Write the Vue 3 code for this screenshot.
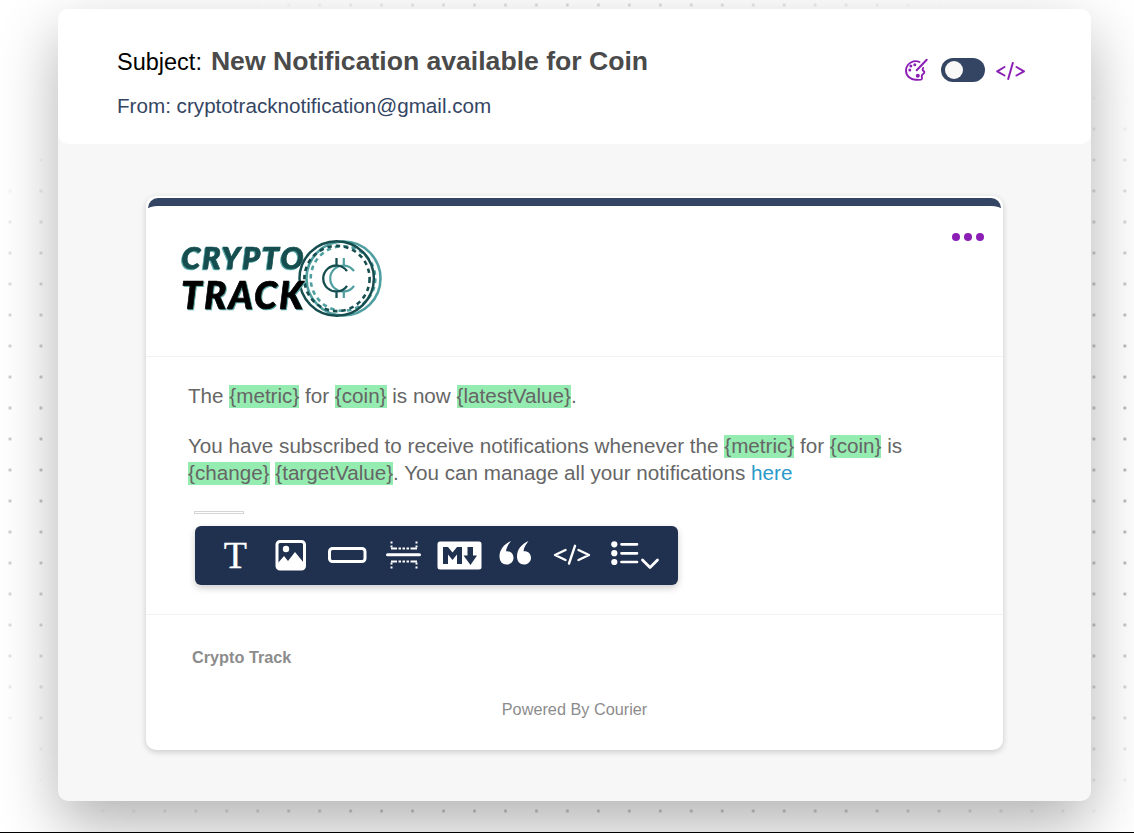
<script setup>
const dots = [0, 1, 2]
</script>

<template>
  <div class="page">
    <div class="dots"></div>
    <main class="window">
      <header class="head">
        <div class="meta">
          <div class="subject"><span class="label">Subject:</span><strong>New Notification available for Coin</strong></div>
          <div class="from">From: cryptotracknotification@gmail.com</div>
        </div>
        <div class="modes">
          <svg class="palette" width="24" height="24" viewBox="0 0 24 24" fill="none" stroke="#8b1fb5" stroke-width="1.9" stroke-linecap="round" stroke-linejoin="round">
            <path d="M15.500 4C10.500 1.600 2 4.800 2 12.600c0 5.300 4.300 8.900 9.400 9.100 2.200.1 4.800.4 6-.2 1.300-.6.500-1.800.3-3.200-.2-1.400.8-2 1.900-2.800 1.100-.8.900-2-.2-2.600-1-.6-.8-1.900-.2-3" />
            <path d="M22.700 1.800 12.700 12.200" stroke-width="2" />
            <g fill="#8b1fb5" stroke="none"><circle cx="5.800" cy="12" r="1.500" /><circle cx="6.800" cy="8" r="1.500" /><circle cx="10.800" cy="6.700" r="1.500" /><circle cx="13.800" cy="17.700" r="2" /></g>
          </svg>
          <div class="toggle"><i></i></div>
          <svg class="code" width="30" height="18" viewBox="0 0 30 18" fill="none" stroke="#8b1fb5" stroke-width="2" stroke-linecap="round" stroke-linejoin="round"><path d="M8.500 5 1.200 9.300 8.500 13.500M20.500 5l7.500 4.300-7.500 4.200M16.800 1l-4.600 16" /></svg>
        </div>
      </header>

      <section class="mail">
        <div class="accent"></div>
        <div class="brand">
          <svg class="logo" width="206" height="84" viewBox="0 0 206 84">
            <g fill="none" stroke="#4f9fa0">
              <circle cx="164.500" cy="42.500" r="37" stroke-width="2.600" />
              <circle cx="164" cy="42.500" r="32.300" stroke-width="2.600" stroke-dasharray="4.500 3.950" />
              <path d="M175 35.200a13 13 0 1 0 0 14.600M164.800 22v7.500M164.800 54.500v7.500" stroke-width="2.200" />
            </g>
            <g fill="none" stroke="#164e50">
              <circle cx="157.700" cy="42.500" r="37.200" stroke-width="2.500" />
              <circle cx="158" cy="42.500" r="32.600" stroke-width="2.600" stroke-dasharray="4.500 3.950" />
              <path d="M168 35.200a13 13 0 1 0 0 14.600M157.500 22v7.500M157.500 54.500v7.500" stroke-width="2.300" />
            </g>
            <text class="word top" x="2.500" y="33" textLength="122">CRYPTO</text>
            <text class="word bottom" x="2" y="72.500" textLength="122">TRACK</text>
          </svg>
          <div class="more"><i v-for="d in dots" :key="d"></i></div>
        </div>

        <div class="body">
          <p>The <mark>{metric}</mark> for <mark>{coin}</mark> is now <mark>{latestValue}</mark>.</p>
          <p>You have subscribed to receive notifications whenever the <mark>{metric}</mark> for <mark>{coin}</mark> is<br><mark>{change}</mark> <mark>{targetValue}</mark>. You can manage all your notifications <a>here</a></p>
          <div class="handle"></div>
          <div class="toolbar">
            <svg width="483" height="59" viewBox="0 0 483 59" fill="none" stroke="#fff" stroke-width="3" stroke-linecap="round" stroke-linejoin="round">
              <text x="40.300" y="42" text-anchor="middle" font-family="Liberation Serif" font-size="38" fill="#fff" stroke="#fff" stroke-width=".3">T</text>
              <rect x="82" y="15.500" width="27.500" height="27.500" rx="3" />
              <circle cx="91" cy="23" r="3.200" fill="#fff" stroke="none" />
              <path d="M83 37 89 30l4 5 7-9 9 11v6H83z" fill="#fff" stroke="none" />
              <rect x="134.500" y="22.500" width="35.500" height="13" rx="3" />
              <path d="M192.500 28.800h32" />
              <path d="M196.500 15.500v6M221.500 15.500v6M196.500 36.500v6M221.500 36.500v6" stroke-width="2" stroke-dasharray="2 2" stroke-linecap="butt" />
              <path d="M196 22.500h26M196 35.500h26" stroke-width="1.900" stroke-dasharray="6 1.500 2.500 1.500 2.500 1.500 2.500 1.500 7" stroke-linecap="butt" />
              <rect x="242.500" y="15.500" width="44" height="28" rx="2.500" fill="#fff" stroke="none" />
              <path d="M248 38V21h5l4.500 5.500L262 21h5v17h-5v-9.500l-4.500 5.500-4.500-5.500V38zM272.500 21h5.500v8.500h4L275.500 39l-7-9.500h4z" fill="#20304f" stroke="none" />
              <g fill="#fff" stroke="none"><path d="M316 15c-7 3-11.500 8.500-11.500 15.500 0 5 3 8 7 8s7-3 7-6.800-2.800-6.500-6.500-6.500h-1c.5-4 2.500-7 5-10.200z" /><path d="M333.500 15c-7 3-11.500 8.500-11.500 15.500 0 5 3 8 7 8s7-3 7-6.800-2.800-6.500-6.500-6.500h-1c.5-4 2.500-7 5-10.200z" /></g>
              <path d="M370.500 24 360 29l10.500 5M383.500 24l10.500 5-10.500 5M380 19.800l-6 17.700" stroke-width="2.400" />
              <g fill="#fff" stroke="none"><circle cx="419.300" cy="18.300" r="3.100" /><circle cx="419.300" cy="27.200" r="3.100" /><circle cx="419.300" cy="36" r="3.100" /></g>
              <path d="M426.500 18.300h15.500M426.500 27.300h15.500M426.500 36h15.500" stroke-width="2.700" />
              <path d="m447.500 34 7.500 7.500 7.500-7.500" stroke-width="2.800" />
            </svg>
          </div>
        </div>

        <footer>
          <strong>Crypto Track</strong>
          <div class="powered">Powered By Courier</div>
        </footer>
      </section>
    </main>
  </div>
</template>

<style>
body { margin: 0; background: #fff; }
</style>

<style scoped>
* { box-sizing: border-box; }
.page {
  position: relative; height: 833px; overflow: hidden; padding: 9px 43px 0 58px;
  border-bottom: 1px solid #000; font-family: "Liberation Sans", Arial, sans-serif;
}
.dots {
  position: absolute; inset: 0; z-index: 4;
  background: radial-gradient(circle at center, #888 1.1px, transparent 2px) -5.500px -10.500px / 30.970px 31px;
  opacity: .65;
  -webkit-mask-image: radial-gradient(730px 518px at 602px 457px, #000 75%, transparent 100%);
  mask-image: radial-gradient(730px 518px at 602px 457px, #000 75%, transparent 100%);
  clip-path: polygon(evenodd, 0 0, 1134px 0, 1134px 833px, 0 833px, 0 0, 58px 9px, 58px 801px, 1091px 801px, 1091px 9px, 58px 9px);
}
.window {
  position: relative; z-index: 3; width: 1033px; height: 792px; border-radius: 10px; background: #f7f7f7;
  box-shadow: 0 24px 60px rgba(0, 0, 0, .3);
}
.head {
  height: 135px; border-radius: 10px; background: #fff; display: flex; justify-content: space-between;
  padding: 34px 65px 0 59px;
}
.subject { display: flex; align-items: baseline; gap: 9px; height: 37px; line-height: 37px; white-space: nowrap; }
.label { font-size: 23.500px; }
.subject strong { font-size: 26.580px; color: #4a4a4a; }
.from { margin-top: 12px; font-size: 20.650px; line-height: 28px; color: #344563; white-space: nowrap; }
.modes { display: flex; height: 54px; align-items: center; }
.palette { margin-right: 13px; }
.toggle { width: 44px; height: 24px; border-radius: 12px; background: #344563; padding: 3px 4px; }
.toggle i { display: block; width: 18px; height: 18px; border-radius: 50%; background: #f8f8f8; }
.code { margin: 1px 0 0 11px; }
.mail {
  width: 857px; height: 554px; margin: 52px 0 0 88px; padding-top: 2px; border-radius: 10px; background: #fff;
  box-shadow: 0 2px 6px rgba(0, 0, 0, .18);
}
.accent { height: 10px; margin: 0 2px; border-radius: 10px 10px 0 0; background: #344563; overflow: hidden; }
.accent::after { content: ""; display: block; margin-top: 8px; height: 6px; border-radius: 10px / 3px; background: #fff; }
.brand { height: 149px; border-bottom: 1px solid #f2f2f2; display: flex; justify-content: space-between; padding: 28px 19px 0 33px; }
.word { font-family: Lato, sans-serif; font-weight: 900; font-style: italic; stroke-width: .7px; }
.top { font-size: 30.500px; fill: #164e50; stroke: #164e50; filter: drop-shadow(-1px 1px 0 #58a7a5); }
.bottom { font-size: 37px; fill: #000; stroke: #000; filter: drop-shadow(1px 1px 0 #58a7a5); }
.more { display: flex; gap: 4px; }
.more i { width: 8px; height: 8px; border-radius: 50%; background: #8b1fb5; margin-top: -3.500px; }
.body { height: 258px; border-bottom: 1px solid #f2f2f2; padding: 25px 42px 0; color: #666; font-size: 20.650px; line-height: 27px; }
p { margin: 0 0 23px; white-space: nowrap; }
mark { padding-bottom: 1px; background: linear-gradient(transparent 1px, #95ecb0 1px); color: inherit; }
a { color: #2b9ac9; }
.handle { width: 50px; height: 3px; border: 1px solid #d5d5d5; margin: 25px 0 12px 6px; }
.toolbar { width: 483px; height: 59px; margin-left: 7px; background: #20304f; border-radius: 6px; box-shadow: 0 3px 7px rgba(0, 0, 0, .2); }
.toolbar svg { display: block; }
footer { padding: 32px 46px 0; color: #8c8c8c; font-size: 16.250px; line-height: 20px; }
.powered { margin-top: 32px; text-align: center; }
</style>
